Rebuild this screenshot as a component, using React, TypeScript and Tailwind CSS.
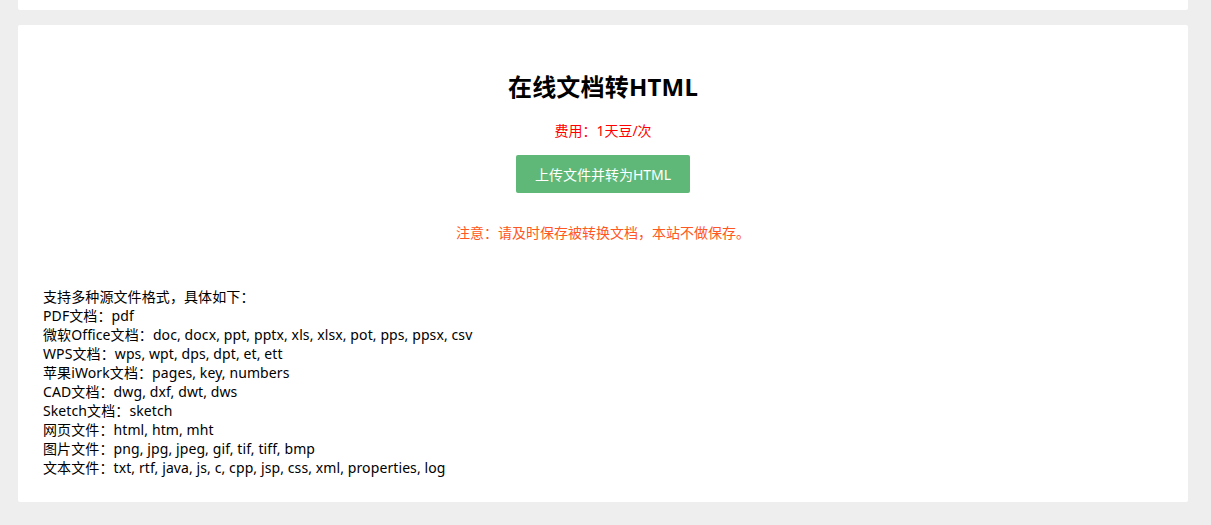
import React from "react";

const lines = [
  "支持多种源文件格式，具体如下：",
  "PDF文档：pdf",
  "微软Office文档：doc, docx, ppt, pptx, xls, xlsx, pot, pps, ppsx, csv",
  "WPS文档：wps, wpt, dps, dpt, et, ett",
  "苹果iWork文档：pages, key, numbers",
  "CAD文档：dwg, dxf, dwt, dws",
  "Sketch文档：sketch",
  "网页文件：html, htm, mht",
  "图片文件：png, jpg, jpeg, gif, tif, tiff, bmp",
  "文本文件：txt, rtf, java, js, c, cpp, jsp, css, xml, properties, log",
];

export default function App() {
  return (
    <div
      className="w-[1211px] h-[525px] bg-[#eeeeee] overflow-hidden pl-[18px] text-[#333]"
      style={{ fontFamily: '"Noto Sans", "Noto Sans CJK SC", sans-serif' }}
    >
      <div className="w-[1170px] h-[10px] bg-white rounded-b-[2px]" />
      <div className="w-[1170px] mt-[15px] h-[477px] bg-white rounded-[2px] flex flex-col items-center">
        <h1 className="mt-[45px] text-[24px] leading-[34px] font-bold text-black tracking-[0.2px]">在线文档转HTML</h1>
        <p className="mt-[17px] text-[14px] leading-[20px] text-[#ff0000]">费用：1天豆/次</p>
        <button className="mt-[14px] w-[174px] h-[38px] bg-[#5fb878] text-white text-[14px] rounded-[2px]">
          上传文件并转为HTML
        </button>
        <p className="mt-[30px] text-[14px] leading-[20px] text-[#ff5722]">注意：请及时保存被转换文档，本站不做保存。</p>
        <div className="self-stretch mt-[44px] pl-[25px] text-[14px] leading-[19px] text-black tracking-[0.1px]">
          {lines.map((l) => (
            <div key={l}>{l}</div>
          ))}
        </div>
      </div>
    </div>
  );
}
